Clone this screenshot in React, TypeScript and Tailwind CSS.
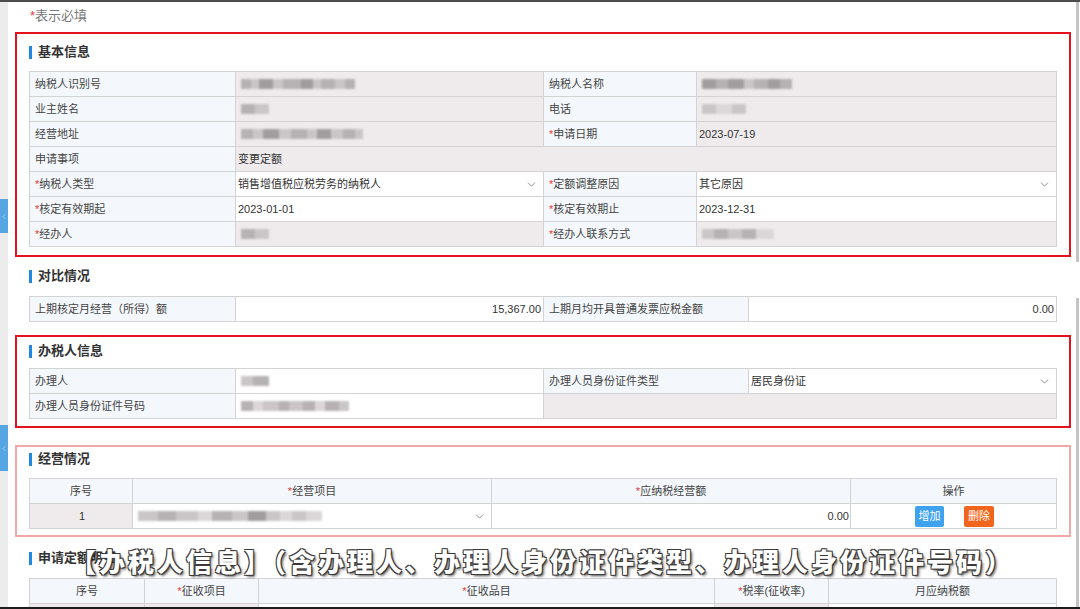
import React from 'react';
import { ChevronDown, ChevronLeft } from 'lucide-react';

type Tone = 'label' | 'gray' | 'white' | 'head';

const toneCls: Record<Tone, string> = {
  label: 'bg-[#f4f8fc] text-[#444] pl-[5px]',
  gray: 'bg-[#efebed] text-[#333] pl-[2px]',
  white: 'bg-white text-[#333] pl-[2px]',
  head: 'bg-[#f4f8fc] text-[#444] justify-center',
};

function Cell({
  tone,
  className = '',
  children,
}: {
  tone: Tone;
  className?: string;
  children?: React.ReactNode;
}) {
  return (
    <div
      className={`h-[25px] border-r border-b border-[#d3d3d3] flex items-center text-[11px] whitespace-nowrap overflow-hidden ${toneCls[tone]} ${className}`}
    >
      {children}
    </div>
  );
}

function Req() {
  return <span className="text-[#e53935]">*</span>;
}

function Select({ children }: { children?: React.ReactNode }) {
  return (
    <div className="flex-1 flex items-center justify-between pr-[5px]">
      <span className="flex items-center">{children}</span>
      <ChevronDown size={13} strokeWidth={1.5} className="text-[#777]" />
    </div>
  );
}

const shades = ['bg-[#a19d9f]', 'bg-[#b6b2b4]', 'bg-[#cac6c8]', 'bg-[#dbd7d9]'];

function Blur({ segs, className = '' }: { segs: [number, number][]; className?: string }) {
  return (
    <div className={`flex h-[10px] blur-[1px] ml-[3px] ${className}`}>
      {segs.map(([w, s], i) => (
        <div key={i} className={`h-full ${shades[s]}`} style={{ width: w }} />
      ))}
    </div>
  );
}

function Title({ children }: { children: React.ReactNode }) {
  return (
    <div className="h-[20px] flex items-center gap-[6px]">
      <div className="w-[3px] h-[13px] bg-[#1f88e0]" />
      <span className="text-[13px] font-bold text-[#333]">{children}</span>
    </div>
  );
}

function Subtitle() {
  return (
    <div className="absolute left-[70px] top-[540px] h-[36px] flex items-center text-[26px] tracking-[3px] font-black text-white font-['Noto_Sans_CJK_SC',sans-serif] [text-shadow:-1px_-1px_0_#3a3a3a,1px_-1px_0_#3a3a3a,-1px_1px_0_#3a3a3a,1px_1px_0_#3a3a3a,2px_2px_3px_rgba(0,0,0,0.7)] whitespace-nowrap">
      【办税人信息】（含办理人、办理人身份证件类型、办理人身份证件号码）
    </div>
  );
}

export default function App() {
  return (
    <div className="w-[1080px] h-[609px] overflow-hidden bg-white border-t-2 border-b-2 border-t-[#4d4d4d] border-b-[#1c1c1c] flex items-start relative font-['Liberation_Sans','Noto_Sans_CJK_SC',sans-serif]">
      {/* left rail */}
      <div className="w-[8px] h-full shrink-0 bg-[#ececec] flex flex-col">
        <div className="mt-[197px] h-[34px] shrink-0 bg-[#56a6e4] flex items-center justify-center">
          <ChevronLeft size={9} strokeWidth={1.5} className="text-white/80" />
        </div>
        <div className="mt-[192px] h-[46px] shrink-0 bg-[#56a6e4] flex items-center justify-center">
          <ChevronLeft size={9} strokeWidth={1.5} className="text-white/80" />
        </div>
      </div>

      {/* main */}
      <div className="w-[1063px] shrink-0 pl-[7px] flex flex-col">
        <div className="h-[28px] shrink-0 flex items-center pl-[15px] text-[13px] text-[#777]">
          <Req />
          表示必填
        </div>

        {/* 基本信息 */}
        <section className="shrink-0 mt-[2px] border-2 border-[#e3121b] px-[12px] pt-[8px] pb-[8px]">
          <Title>基本信息</Title>
          <div className="mt-[9px] grid grid-cols-[206px_308px_153px_360px] border-l border-t border-[#d3d3d3]">
            <Cell tone="label">纳税人识别号</Cell>
            <Cell tone="gray">
              <Blur segs={[[10, 1], [8, 2], [14, 0], [10, 2], [18, 1], [12, 0], [8, 2], [14, 1], [10, 2], [10, 1]]} />
            </Cell>
            <Cell tone="label">纳税人名称</Cell>
            <Cell tone="gray">
              <Blur segs={[[14, 0], [12, 1], [16, 0], [10, 2], [14, 1], [12, 0], [12, 1]]} />
            </Cell>

            <Cell tone="label">业主姓名</Cell>
            <Cell tone="gray">
              <Blur segs={[[14, 1], [14, 2]]} />
            </Cell>
            <Cell tone="label">电话</Cell>
            <Cell tone="gray">
              <Blur segs={[[14, 2], [16, 3], [14, 2]]} />
            </Cell>

            <Cell tone="label">经营地址</Cell>
            <Cell tone="gray">
              <Blur segs={[[12, 1], [10, 2], [16, 0], [12, 2], [16, 1], [10, 2], [14, 0], [12, 2], [12, 1], [8, 2]]} />
            </Cell>
            <Cell tone="label">
              <Req />
              申请日期
            </Cell>
            <Cell tone="gray">2023-07-19</Cell>

            <Cell tone="label">申请事项</Cell>
            <Cell tone="gray" className="col-span-3">
              变更定额
            </Cell>

            <Cell tone="label">
              <Req />
              纳税人类型
            </Cell>
            <Cell tone="white">
              <Select>销售增值税应税劳务的纳税人</Select>
            </Cell>
            <Cell tone="label">
              <Req />
              定额调整原因
            </Cell>
            <Cell tone="white">
              <Select>其它原因</Select>
            </Cell>

            <Cell tone="label">
              <Req />
              核定有效期起
            </Cell>
            <Cell tone="white">2023-01-01</Cell>
            <Cell tone="label">
              <Req />
              核定有效期止
            </Cell>
            <Cell tone="white">2023-12-31</Cell>

            <Cell tone="label">
              <Req />
              经办人
            </Cell>
            <Cell tone="gray">
              <Blur segs={[[14, 1], [14, 2]]} />
            </Cell>
            <Cell tone="label">
              <Req />
              经办人联系方式
            </Cell>
            <Cell tone="gray">
              <Blur segs={[[12, 2], [14, 1], [14, 2], [14, 1], [18, 3]]} />
            </Cell>
          </div>
        </section>

        {/* 对比情况 */}
        <section className="shrink-0 border-2 border-transparent px-[12px] pt-[7px] pb-[11px]">
          <Title>对比情况</Title>
          <div className="mt-[10px] grid grid-cols-[206px_308px_205px_308px] border-l border-t border-[#d3d3d3]">
            <Cell tone="label">上期核定月经营（所得）额</Cell>
            <Cell tone="white" className="justify-end pr-[2px]">
              15,367.00
            </Cell>
            <Cell tone="label">上期月均开具普通发票应税金额</Cell>
            <Cell tone="white" className="justify-end pr-[2px]">
              0.00
            </Cell>
          </div>
        </section>

        {/* 办税人信息 */}
        <section className="shrink-0 border-2 border-[#e3121b] px-[12px] pt-[4px] pb-[7px]">
          <Title>办税人信息</Title>
          <div className="mt-[7px] grid grid-cols-[206px_308px_205px_308px] border-l border-t border-[#d3d3d3]">
            <Cell tone="label">办理人</Cell>
            <Cell tone="white">
              <Blur segs={[[12, 2], [16, 1]]} />
            </Cell>
            <Cell tone="label">办理人员身份证件类型</Cell>
            <Cell tone="white">
              <Select>居民身份证</Select>
            </Cell>

            <Cell tone="label">办理人员身份证件号码</Cell>
            <Cell tone="white">
              <Blur segs={[[12, 1], [10, 3], [16, 2], [10, 1], [14, 2], [12, 1], [10, 3], [14, 1], [10, 2]]} />
            </Cell>
            <Cell tone="gray" className="col-span-2" />
          </div>
        </section>

        {/* 经营情况 */}
        <section className="shrink-0 mt-[17px] border-2 border-[#f3a7a7] px-[12px] pt-[2px] pb-[6px]">
          <Title>经营情况</Title>
          <div className="mt-[9px] grid grid-cols-[103px_359px_359px_206px] border-l border-t border-[#d3d3d3]">
            <Cell tone="head">序号</Cell>
            <Cell tone="head">
              <Req />
              经营项目
            </Cell>
            <Cell tone="head">
              <Req />
              应纳税经营额
            </Cell>
            <Cell tone="head">操作</Cell>

            <Cell tone="gray" className="justify-center pl-0">
              1
            </Cell>
            <Cell tone="white">
              <Select>
                <Blur segs={[[20, 2], [18, 1], [22, 2], [14, 3], [20, 1], [16, 2], [18, 0], [14, 2], [12, 3], [14, 2], [16, 3]]} />
              </Select>
            </Cell>
            <Cell tone="white" className="justify-end pr-[1px]">
              0.00
            </Cell>
            <Cell tone="white" className="justify-center gap-[20px] pl-0">
              <button className="w-[29px] h-[21px] rounded-[2px] bg-[#3fa2ef] text-white text-[11px] flex items-center justify-center">
                增加
              </button>
              <button className="w-[30px] h-[21px] rounded-[2px] bg-[#f2651d] text-white text-[11px] flex items-center justify-center">
                删除
              </button>
            </Cell>
          </div>
        </section>

        {/* 申请定额明细 */}
        <section className="shrink-0 border-2 border-transparent px-[12px] pt-[9px]">
          <Title>申请定额明细</Title>
          <div className="mt-[10px] grid grid-cols-[115px_114px_456px_114px_228px] border-l border-t border-[#d3d3d3]">
            <Cell tone="head">序号</Cell>
            <Cell tone="head">
              <Req />
              征收项目
            </Cell>
            <Cell tone="head">
              <Req />
              征收品目
            </Cell>
            <Cell tone="head">
              <Req />
              税率(征收率)
            </Cell>
            <Cell tone="head">月应纳税额</Cell>

            <Cell tone="gray" />
            <Cell tone="gray" />
            <Cell tone="white" />
            <Cell tone="gray" />
            <Cell tone="white" />
          </div>
        </section>
      </div>

      {/* right rail */}
      <div className="flex-1 h-full flex flex-col items-end pr-[1px]">
        <div className="w-[3px] h-[260px] shrink-0 bg-[#c4c4c4]" />
        <div className="w-[3px] mt-[36px] flex-1 bg-[#c4c4c4]" />
      </div>

      <Subtitle />
    </div>
  );
}
